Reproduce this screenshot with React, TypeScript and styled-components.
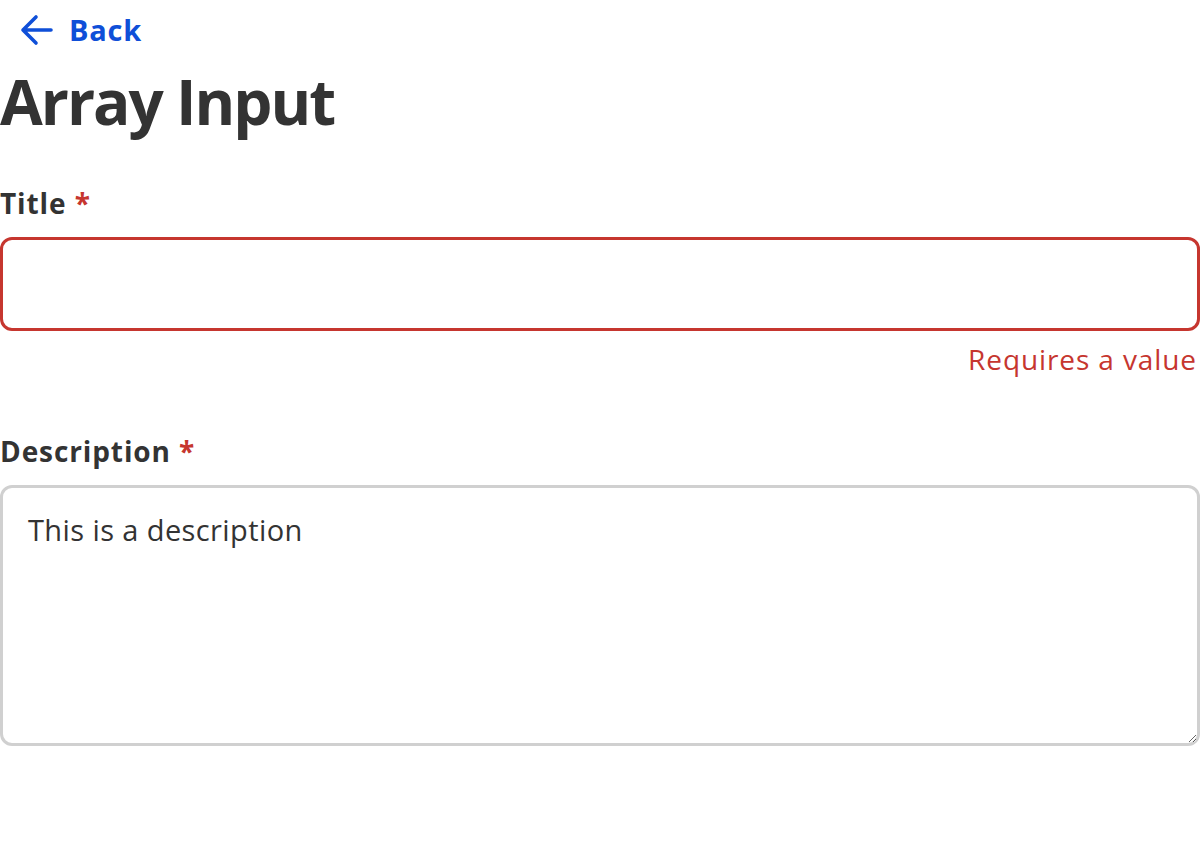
import styled, { createGlobalStyle } from "styled-components";

const GlobalStyle = createGlobalStyle`
  html, body {
    margin: 0;
    padding: 0;
    background: #fff;
  }
  body {
    font-family: "Open Sans", Lato, sans-serif;
    color: #333;
  }
  * {
    box-sizing: border-box;
  }
`;

export default function App() {
  return (
    <>
      <GlobalStyle />
      <Page>
        <BackLink href="#">
          <svg width="34" height="32" viewBox="0 0 34 32" fill="none">
            <path
              d="M32 16H4M17 3L4 16L17 29"
              stroke="currentColor"
              strokeWidth="3.6"
              strokeLinecap="round"
              strokeLinejoin="round"
            />
          </svg>
          Back
        </BackLink>
        <Heading>Array Input</Heading>

        <Field>
          <Label htmlFor="title">
            Title <Required>*</Required>
          </Label>
          <TextInput id="title" type="text" $invalid />
          <ErrorText>Requires a value</ErrorText>
        </Field>

        <Field>
          <Label htmlFor="description">
            Description <Required>*</Required>
          </Label>
          <TextArea id="description" defaultValue="This is a description" />
        </Field>
      </Page>
    </>
  );
}

const Page = styled.div`
  display: flex;
  flex-direction: column;
  padding: 12px 0 0;
`;

const BackLink = styled.a`
  display: flex;
  align-items: center;
  gap: 16px;
  align-self: flex-start;
  padding-left: 19px;
  font-size: 29px;
  line-height: 36px;
  font-weight: 700;
  letter-spacing: 0.8px;
  color: #0f4fd8;
  text-decoration: none;
`;

const Heading = styled.h1`
  margin: 16px 0 0;
  font-size: 62px;
  line-height: 1.2;
  font-weight: 700;
  color: #333;
  letter-spacing: -2px;
`;

const Field = styled.div`
  display: flex;
  flex-direction: column;
  margin-top: 49px;

  & + & {
    margin-top: 58px;
  }
`;

const Label = styled.label`
  font-size: 28px;
  line-height: 32px;
  font-weight: 700;
  letter-spacing: 0.9px;
  color: #333;
  margin-bottom: 18px;
`;

const Required = styled.span`
  color: #c6362f;
`;

const TextInput = styled.input<{ $invalid?: boolean }>`
  height: 94px;
  width: 100%;
  padding: 0 25px;
  font-family: inherit;
  font-size: 29px;
  color: #333;
  background: #fff;
  border: 3px solid ${({ $invalid }) => ($invalid ? "#c6362f" : "#d0d0d0")};
  border-radius: 12px;
  outline: none;
`;

const ErrorText = styled.div`
  margin-top: 12px;
  padding-right: 3px;
  text-align: right;
  font-size: 28px;
  line-height: 1.2;
  letter-spacing: 0.9px;
  color: #c6362f;
`;

const TextArea = styled.textarea`
  height: 261px;
  width: 100%;
  padding: 25px 25px;
  font-family: inherit;
  font-size: 29px;
  line-height: 1.2;
  letter-spacing: 0.4px;
  color: #333;
  background: #fff;
  border: 3px solid #d0d0d0;
  border-radius: 12px;
  outline: none;
  resize: vertical;
`;
